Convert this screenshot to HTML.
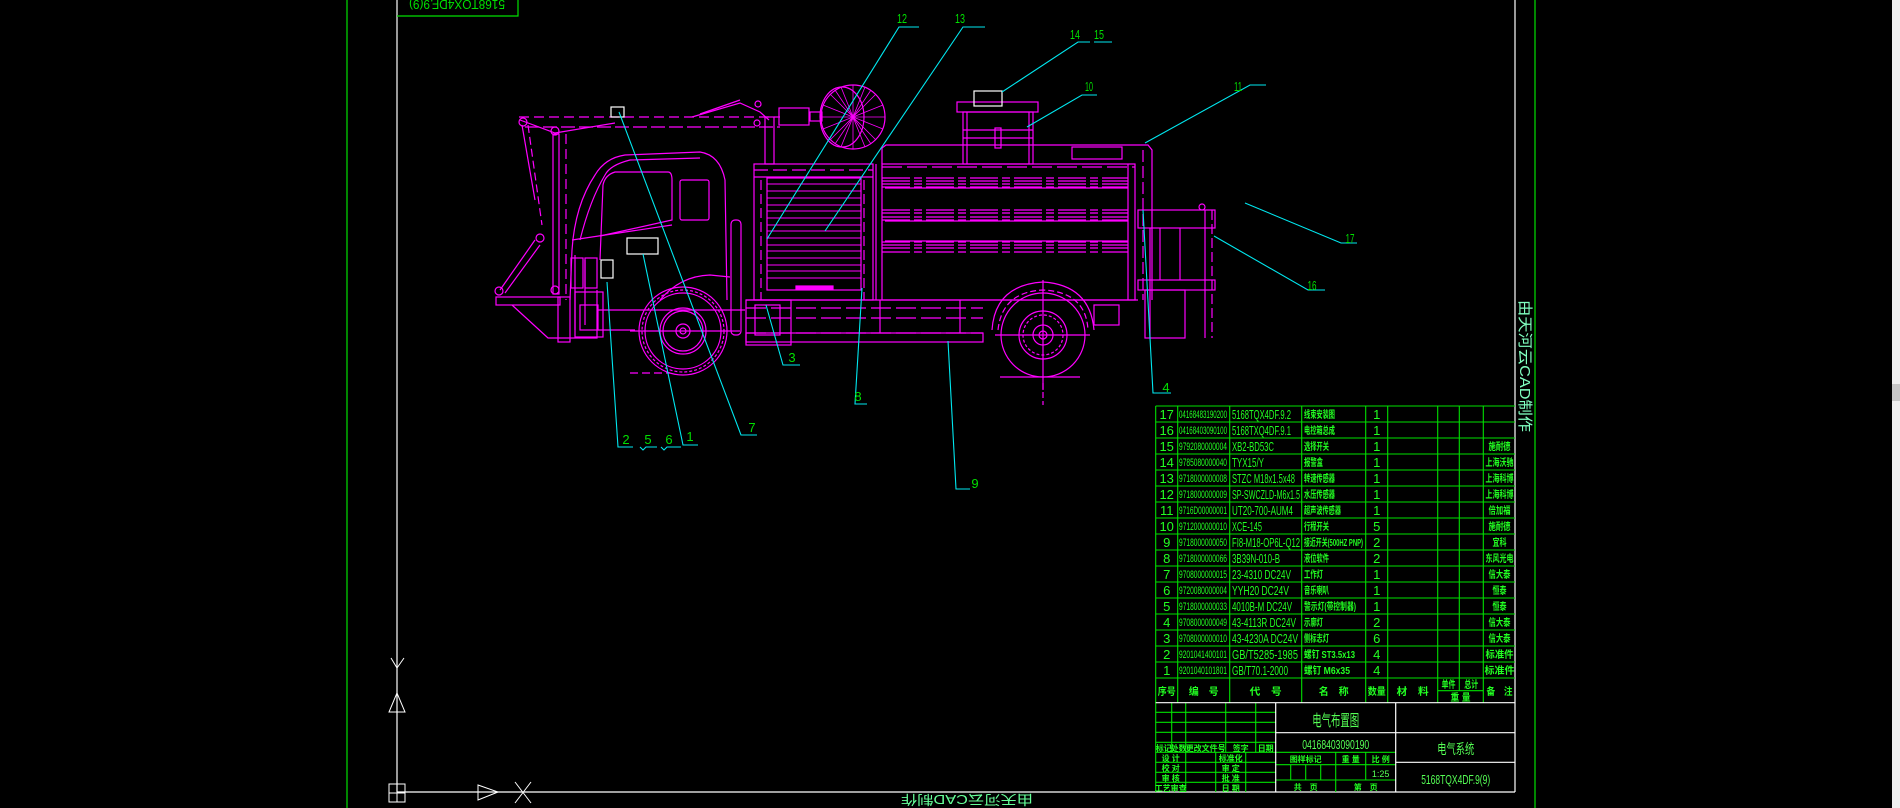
<!DOCTYPE html>
<html><head><meta charset="utf-8"><style>
html,body{margin:0;padding:0;background:#000;overflow:hidden}
svg{display:block}
text{font-family:"Liberation Sans","Noto Sans CJK SC",sans-serif}
</style></head><body>
<svg width="1900" height="808" viewBox="0 0 1900 808" xmlns="http://www.w3.org/2000/svg">
<rect width="1900" height="808" fill="#000"/>
<rect x="1892" y="0" width="8" height="808" fill="#f0f0f0"/>
<rect x="1892" y="384" width="8" height="17" fill="#c8c8c8"/>
<!-- frame -->
<g stroke-width="1.2" fill="none">
<line x1="347" y1="0" x2="347" y2="808" stroke="#00e000"/>
<line x1="1535" y1="0" x2="1535" y2="808" stroke="#00e000"/>
<line x1="397" y1="0" x2="397" y2="792" stroke="#fff"/>
<line x1="1515" y1="0" x2="1515" y2="792" stroke="#fff"/>
<line x1="397" y1="792" x2="1515" y2="792" stroke="#fff"/>
<polyline points="397,16 518,16 518,0" stroke="#00e000"/>
</g>
<text transform="rotate(180 457 5)" x="457" y="10" font-size="13" fill="#00e000" text-anchor="middle" textLength="96" lengthAdjust="spacingAndGlyphs">5168TQX4DF.9(9)</text>
<text transform="rotate(180 967 800)" x="967" y="805" font-size="13" fill="#66ff99" text-anchor="middle" textLength="132" lengthAdjust="spacingAndGlyphs">由天河云CAD制作</text>
<text transform="rotate(90 1525 366)" x="1525" y="371" font-size="15" fill="#80ffc0" text-anchor="middle" textLength="132" lengthAdjust="spacingAndGlyphs">由天河云CAD制作</text>
<!-- UCS -->
<g stroke="#fff" stroke-width="1" fill="none">
<rect x="389" y="784" width="16" height="18"/><line x1="397" y1="784" x2="397" y2="802"/><line x1="389" y1="793" x2="405" y2="793"/>
<polygon points="397,693 389,712 405,712"/><line x1="397" y1="700" x2="397" y2="712"/>
<polyline points="391,658 397,668 404,658"/><line x1="397" y1="668" x2="397" y2="678"/>
<polygon points="478,785 498,792 478,800"/><line x1="484" y1="792" x2="498" y2="792"/>
<line x1="515" y1="782" x2="531" y2="803"/><line x1="531" y1="782" x2="515" y2="803"/>
</g>

<!-- TRUCK -->
<g stroke="#ff00ff" stroke-width="1.2" fill="none">
<!-- boom -->
<line x1="519" y1="117" x2="780" y2="117" stroke-dasharray="10,5"/>
<line x1="525" y1="127" x2="780" y2="127" stroke-dasharray="14,4"/>
<polyline points="520,120 555,133 615,123"/>
<circle cx="523" cy="122" r="4"/><circle cx="555" cy="131" r="4"/>
<polyline points="692,117 740,103 760,112 769,120"/>
<line x1="700" y1="114" x2="740" y2="100"/>
<circle cx="758" cy="104" r="3"/><circle cx="757" cy="123" r="3"/>
<rect x="765" y="117" width="9" height="47"/>
<rect x="779" y="108" width="30" height="17"/>
<rect x="810" y="112" width="12" height="9"/>
<!-- brush disc -->
<ellipse cx="853" cy="117" rx="32" ry="32"/>
<ellipse cx="842" cy="117" rx="22" ry="30"/>
<g stroke-width="0.8">
<line x1="853" y1="85" x2="853" y2="149"/><line x1="821" y1="117" x2="885" y2="117"/>
<line x1="830" y1="94" x2="876" y2="140"/><line x1="876" y1="94" x2="830" y2="140"/>
<line x1="841" y1="87" x2="865" y2="147"/><line x1="865" y1="87" x2="841" y2="147"/>
<line x1="823" y1="105" x2="883" y2="129"/><line x1="823" y1="129" x2="883" y2="105"/>
<line x1="835" y1="90" x2="871" y2="144"/><line x1="871" y1="90" x2="835" y2="144"/>
</g>
<!-- hook arm -->
<line x1="522" y1="125" x2="535" y2="200"/><line x1="528" y1="125" x2="542" y2="225" stroke-dasharray="8,4"/>
<rect x="553" y="134" width="6" height="160"/>
<line x1="566" y1="134" x2="566" y2="300" stroke-dasharray="10,5"/>
<line x1="535" y1="240" x2="500" y2="290"/><line x1="540" y1="245" x2="505" y2="293"/>
<circle cx="540" cy="238" r="4"/><circle cx="555" cy="290" r="4"/><circle cx="499" cy="291" r="4"/>
<rect x="496" y="297" width="64" height="8"/>
<polyline points="512,305 548,338 597,338 597,290"/>
<rect x="558" y="297" width="12" height="45"/>
<!-- cab -->
<path d="M570,300 L572,250 Q575,205 595,175 Q605,158 625,155 L700,152 Q720,155 725,180 L727,300"/>
<path d="M580,240 Q590,200 605,175 Q610,165 630,160 L700,158"/>
<path d="M600,260 L603,185 Q605,175 615,172 L668,172 Q672,172 672,180 L672,220 L600,236"/>
<rect x="680" y="180" width="29" height="40" rx="2"/>
<line x1="572" y1="240" x2="672" y2="225"/>
<path d="M575,255 L575,330"/><path d="M585,260 L585,325"/>
<rect x="571" y="258" width="12" height="30"/><rect x="585" y="258" width="12" height="30"/>
<path d="M660,300 Q680,276 710,275 L730,277"/>
<rect x="575" y="292" width="28" height="45"/>
<rect x="580" y="305" width="18" height="25"/>
<line x1="597" y1="310" x2="745" y2="310"/>
<line x1="597" y1="330" x2="635" y2="330"/>
<rect x="731" y="220" width="10" height="115" rx="4"/>
<!-- front wheel -->
<circle cx="683" cy="331" r="44"/>
<circle cx="683" cy="331" r="41" stroke-dasharray="3,2"/>
<circle cx="683" cy="331" r="38"/>
<circle cx="683" cy="331" r="23"/><circle cx="683" cy="331" r="20"/>
<circle cx="683" cy="331" r="7"/><circle cx="683" cy="331" r="3"/>
<line x1="630" y1="331" x2="740" y2="331"/>
<line x1="630" y1="373" x2="670" y2="373" stroke-dasharray="8,4"/>
<!-- compartment -->
<rect x="754" y="164" width="119" height="136"/>
<line x1="754" y1="170" x2="873" y2="170" stroke-dasharray="14,5"/>
<line x1="754" y1="177" x2="873" y2="177"/>
<rect x="767" y="178" width="94" height="112"/>
<line x1="761" y1="180" x2="761" y2="300" stroke-dasharray="10,4"/>
<line x1="864" y1="180" x2="864" y2="300" stroke-dasharray="10,4"/>
<g stroke-width="0.9">
<line x1="767" y1="184" x2="861" y2="184"/><line x1="767" y1="191" x2="861" y2="191"/>
<line x1="767" y1="198" x2="861" y2="198"/><line x1="767" y1="205" x2="861" y2="205"/>
<line x1="767" y1="211" x2="861" y2="211"/><line x1="767" y1="218" x2="861" y2="218"/>
<line x1="767" y1="225" x2="861" y2="225"/><line x1="767" y1="231" x2="861" y2="231"/>
<line x1="767" y1="238" x2="861" y2="238"/><line x1="767" y1="245" x2="861" y2="245"/>
<line x1="767" y1="251" x2="861" y2="251"/><line x1="767" y1="258" x2="861" y2="258"/>
<line x1="767" y1="265" x2="861" y2="265"/><line x1="767" y1="271" x2="861" y2="271"/>
<line x1="767" y1="278" x2="861" y2="278"/>
</g>
<rect x="796" y="286" width="37" height="3" fill="#ff00ff"/>
<line x1="876" y1="164" x2="876" y2="300"/>
<!-- tank -->
<rect x="882" y="164" width="253" height="136"/>
<line x1="882" y1="167" x2="1135" y2="167" stroke-dasharray="20,5"/>
<polyline points="882,164 882,148 886,145 1148,145 1152,150 1152,300" />
<line x1="1143" y1="150" x2="1143" y2="300" stroke-dasharray="12,4"/>
<g stroke-width="1.3" stroke-dasharray="28,4,8,4">
<line x1="882" y1="178" x2="1128" y2="178"/><line x1="882" y1="181" x2="1128" y2="181"/>
<line x1="882" y1="184" x2="1128" y2="184"/><line x1="882" y1="187" x2="1128" y2="187"/>
<line x1="882" y1="210" x2="1128" y2="210"/><line x1="882" y1="213" x2="1128" y2="213"/>
<line x1="882" y1="217" x2="1128" y2="217"/><line x1="882" y1="220" x2="1128" y2="220"/>
<line x1="882" y1="242" x2="1128" y2="242"/><line x1="882" y1="245" x2="1128" y2="245"/>
<line x1="882" y1="248" x2="1128" y2="248"/><line x1="882" y1="252" x2="1128" y2="252"/>
</g>
<line x1="885" y1="188" x2="1128" y2="188"/><line x1="885" y1="221" x2="1128" y2="221"/>
<line x1="885" y1="241" x2="1128" y2="241"/>
<line x1="1128" y1="164" x2="1128" y2="300"/>
<rect x="1072" y="147" width="50" height="12"/>
<!-- roof rack -->
<rect x="957" y="102" width="81" height="10"/>
<rect x="963" y="112" width="70" height="52"/>
<line x1="967" y1="112" x2="967" y2="164"/><line x1="1029" y1="112" x2="1029" y2="164"/>
<line x1="963" y1="130" x2="1033" y2="130"/><line x1="963" y1="138" x2="1033" y2="138"/>
<rect x="995" y="128" width="6" height="20"/>
<!-- rear platform -->
<rect x="1138" y="210" width="77" height="18"/>
<line x1="1150" y1="228" x2="1150" y2="338"/><line x1="1160" y1="228" x2="1160" y2="280"/>
<line x1="1180" y1="228" x2="1180" y2="280"/>
<rect x="1138" y="280" width="77" height="10"/>
<rect x="1145" y="290" width="40" height="48"/>
<line x1="1205" y1="210" x2="1205" y2="338"/><line x1="1212" y1="210" x2="1212" y2="338" stroke-dasharray="10,4"/>
<circle cx="1202" cy="207" r="3"/>
<!-- chassis -->
<line x1="746" y1="300" x2="1138" y2="300"/>
<line x1="746" y1="308" x2="983" y2="308" stroke-dasharray="20,5"/>
<line x1="746" y1="318" x2="983" y2="318" stroke-dasharray="20,5"/>
<line x1="746" y1="333" x2="983" y2="333" stroke-dasharray="20,5"/>
<rect x="746" y="333" width="237" height="9"/>
<rect x="746" y="300" width="45" height="45"/>
<rect x="755" y="305" width="25" height="30"/>
<line x1="880" y1="300" x2="880" y2="333"/><line x1="960" y1="300" x2="960" y2="333"/>
<!-- rear wheel -->
<path d="M992,330 Q995,285 1043,282 Q1090,285 1094,330"/>
<path d="M998,330 Q1002,292 1043,290 Q1086,292 1088,330" stroke-dasharray="6,3"/>
<circle cx="1043" cy="335" r="42"/>
<circle cx="1043" cy="335" r="24"/><circle cx="1043" cy="335" r="20" stroke-dasharray="3,2"/>
<circle cx="1043" cy="335" r="10"/><circle cx="1043" cy="335" r="4"/>
<line x1="1043" y1="280" x2="1043" y2="390"/><line x1="995" y1="335" x2="1090" y2="335"/>
<line x1="1000" y1="377" x2="1080" y2="377"/>
<line x1="1043" y1="383" x2="1043" y2="405" stroke-dasharray="6,3"/>
<rect x="1094" y="305" width="25" height="20"/>
</g>
<!-- white boxes -->
<g stroke="#fff" stroke-width="1.2" fill="none">
<rect x="611" y="107" width="13" height="10"/>
<rect x="627" y="238" width="31" height="16"/>
<rect x="601" y="260" width="12" height="18"/>
<rect x="974" y="91" width="28" height="15"/>
</g>
<!-- leaders -->
<g stroke="#00e8f0" stroke-width="1.1" fill="none">
<polyline points="767,239 899,27 919,27"/>
<polyline points="825,231 963,27 985,27"/>
<polyline points="1002,92 1078,42 1090,42"/>
<line x1="1094" y1="42" x2="1112" y2="42"/>
<polyline points="1027,127 1082,95 1097,95"/>
<polyline points="1145,143 1250,85 1266,85"/>
<polyline points="1245,203 1341,243 1357,243"/>
<polyline points="1214,236 1308,290 1325,290"/>
<polyline points="1143,210 1153,393 1171,393"/>
<polyline points="948,341 956,489 970,489"/>
<polyline points="862,288 855,404 867,404"/>
<polyline points="766,305 783,365 800,365"/>
<polyline points="619,112 741,435 757,435"/>
<polyline points="607,282 618,447 633,447"/>
<polyline points="640,447 643,450 646,447 657,447"/>
<polyline points="661,447 664,450 667,447 681,447"/>
<polyline points="643,254 683,445 698,445"/>
</g>
<g fill="#00e000" font-size="13" text-anchor="middle">
<text x="902" y="23" textLength="10" lengthAdjust="spacingAndGlyphs">12</text>
<text x="960" y="23" textLength="10" lengthAdjust="spacingAndGlyphs">13</text>
<text x="1075" y="39" textLength="10" lengthAdjust="spacingAndGlyphs">14</text>
<text x="1099" y="39" textLength="10" lengthAdjust="spacingAndGlyphs">15</text>
<text x="1089" y="91" textLength="8" lengthAdjust="spacingAndGlyphs">10</text>
<text x="1238" y="91" textLength="8" lengthAdjust="spacingAndGlyphs">11</text>
<text x="1350" y="243" textLength="9" lengthAdjust="spacingAndGlyphs">17</text>
<text x="1312" y="290" textLength="9" lengthAdjust="spacingAndGlyphs">16</text>
<text x="1166" y="392">4</text>
<text x="975" y="488">9</text>
<text x="858" y="401">8</text>
<text x="792" y="362">3</text>
<text x="752" y="432">7</text>
<text x="626" y="444">2</text>
<text x="648" y="444">5</text>
<text x="669" y="444">6</text>
<text x="690" y="441">1</text>
</g>

<!-- TABLE -->
<g stroke="#00e000" stroke-width="1.1" fill="none">
<line x1="1155.7" y1="406" x2="1515" y2="406"/>
<line x1="1155.7" y1="422" x2="1515" y2="422"/><line x1="1155.7" y1="438" x2="1515" y2="438"/>
<line x1="1155.7" y1="454" x2="1515" y2="454"/><line x1="1155.7" y1="470" x2="1515" y2="470"/>
<line x1="1155.7" y1="486" x2="1515" y2="486"/><line x1="1155.7" y1="502" x2="1515" y2="502"/>
<line x1="1155.7" y1="518" x2="1515" y2="518"/><line x1="1155.7" y1="534" x2="1515" y2="534"/>
<line x1="1155.7" y1="550" x2="1515" y2="550"/><line x1="1155.7" y1="566" x2="1515" y2="566"/>
<line x1="1155.7" y1="582" x2="1515" y2="582"/><line x1="1155.7" y1="598" x2="1515" y2="598"/>
<line x1="1155.7" y1="614" x2="1515" y2="614"/><line x1="1155.7" y1="630" x2="1515" y2="630"/>
<line x1="1155.7" y1="646" x2="1515" y2="646"/><line x1="1155.7" y1="662" x2="1515" y2="662"/>
<line x1="1155.7" y1="678" x2="1515" y2="678"/>
<line x1="1437.7" y1="690.7" x2="1483.3" y2="690.7"/>
<line x1="1155.7" y1="406" x2="1155.7" y2="792"/>
<line x1="1177.7" y1="406" x2="1177.7" y2="702.7"/><line x1="1229.7" y1="406" x2="1229.7" y2="702.7"/>
<line x1="1301.7" y1="406" x2="1301.7" y2="702.7"/><line x1="1365.7" y1="406" x2="1365.7" y2="702.7"/>
<line x1="1387.7" y1="406" x2="1387.7" y2="702.7"/><line x1="1437.7" y1="406" x2="1437.7" y2="702.7"/>
<line x1="1459.3" y1="406" x2="1459.3" y2="690.7"/><line x1="1483.3" y1="406" x2="1483.3" y2="702.7"/>
<!-- left title block -->
<line x1="1155.7" y1="712.3" x2="1275.7" y2="712.3"/><line x1="1155.7" y1="722.3" x2="1275.7" y2="722.3"/>
<line x1="1155.7" y1="732.3" x2="1275.7" y2="732.3"/><line x1="1155.7" y1="742.3" x2="1275.7" y2="742.3"/>
<line x1="1155.7" y1="752.3" x2="1275.7" y2="752.3"/><line x1="1155.7" y1="762.3" x2="1275.7" y2="762.3"/>
<line x1="1155.7" y1="772.3" x2="1275.7" y2="772.3"/><line x1="1155.7" y1="782.3" x2="1275.7" y2="782.3"/>
<line x1="1171.7" y1="702.7" x2="1171.7" y2="752.3"/><line x1="1185.7" y1="702.7" x2="1185.7" y2="792"/>
<line x1="1225.7" y1="702.7" x2="1225.7" y2="752.3"/><line x1="1255.7" y1="702.7" x2="1255.7" y2="752.3"/>
<line x1="1215.7" y1="752.3" x2="1215.7" y2="792"/><line x1="1245.7" y1="752.3" x2="1245.7" y2="792"/>
<!-- middle -->
<line x1="1275.7" y1="752.3" x2="1395.7" y2="752.3"/><line x1="1275.7" y1="764.7" x2="1395.7" y2="764.7"/>
<line x1="1275.7" y1="780" x2="1395.7" y2="780"/>
<line x1="1290.7" y1="764.7" x2="1290.7" y2="780"/><line x1="1305.7" y1="764.7" x2="1305.7" y2="780"/>
<line x1="1320.7" y1="764.7" x2="1320.7" y2="780"/><line x1="1335.7" y1="752.3" x2="1335.7" y2="792"/>
<line x1="1365.7" y1="752.3" x2="1365.7" y2="780"/>
</g>
<g stroke="#fff" stroke-width="1.2" fill="none">
<line x1="1155.7" y1="702.7" x2="1515" y2="702.7"/>
<line x1="1275.7" y1="702.7" x2="1275.7" y2="792"/>
<line x1="1395.7" y1="702.7" x2="1395.7" y2="792"/>
<line x1="1275.7" y1="732.7" x2="1515" y2="732.7"/>
<line x1="1395.7" y1="762.3" x2="1515" y2="762.3"/>
</g>
<g fill="#22ff22" font-size="13" lengthAdjust="spacingAndGlyphs">
<g text-anchor="middle">
<text x="1166.7" y="419">17</text><text x="1166.7" y="435">16</text><text x="1166.7" y="451">15</text>
<text x="1166.7" y="467">14</text><text x="1166.7" y="483">13</text><text x="1166.7" y="499">12</text>
<text x="1166.7" y="515">11</text><text x="1166.7" y="531">10</text><text x="1166.7" y="547">9</text>
<text x="1166.7" y="563">8</text><text x="1166.7" y="579">7</text><text x="1166.7" y="595">6</text>
<text x="1166.7" y="611">5</text><text x="1166.7" y="627">4</text><text x="1166.7" y="643">3</text>
<text x="1166.7" y="659">2</text><text x="1166.7" y="675">1</text>
<text x="1376.7" y="419">1</text><text x="1376.7" y="435">1</text><text x="1376.7" y="451">1</text>
<text x="1376.7" y="467">1</text><text x="1376.7" y="483">1</text><text x="1376.7" y="499">1</text>
<text x="1376.7" y="515">1</text><text x="1376.7" y="531">5</text><text x="1376.7" y="547">2</text>
<text x="1376.7" y="563">2</text><text x="1376.7" y="579">1</text><text x="1376.7" y="595">1</text>
<text x="1376.7" y="611">1</text><text x="1376.7" y="627">2</text><text x="1376.7" y="643">6</text>
<text x="1376.7" y="659">4</text><text x="1376.7" y="675">4</text>
</g>
<g font-size="11">
<text x="1179" y="418" textLength="48" lengthAdjust="spacingAndGlyphs">04168483190200</text>
<text x="1179" y="434" textLength="48" lengthAdjust="spacingAndGlyphs">04168403090100</text>
<text x="1179" y="450" textLength="48" lengthAdjust="spacingAndGlyphs">9792080000004</text>
<text x="1179" y="466" textLength="48" lengthAdjust="spacingAndGlyphs">9785080000040</text>
<text x="1179" y="482" textLength="48" lengthAdjust="spacingAndGlyphs">9718000000008</text>
<text x="1179" y="498" textLength="48" lengthAdjust="spacingAndGlyphs">9718000000009</text>
<text x="1179" y="514" textLength="48" lengthAdjust="spacingAndGlyphs">9716D00000001</text>
<text x="1179" y="530" textLength="48" lengthAdjust="spacingAndGlyphs">9712000000010</text>
<text x="1179" y="546" textLength="48" lengthAdjust="spacingAndGlyphs">9718000000050</text>
<text x="1179" y="562" textLength="48" lengthAdjust="spacingAndGlyphs">9718000000066</text>
<text x="1179" y="578" textLength="48" lengthAdjust="spacingAndGlyphs">9708000000015</text>
<text x="1179" y="594" textLength="48" lengthAdjust="spacingAndGlyphs">9720080000004</text>
<text x="1179" y="610" textLength="48" lengthAdjust="spacingAndGlyphs">9718000000033</text>
<text x="1179" y="626" textLength="48" lengthAdjust="spacingAndGlyphs">9708000000049</text>
<text x="1179" y="642" textLength="48" lengthAdjust="spacingAndGlyphs">9708000000010</text>
<text x="1179" y="658" textLength="48" lengthAdjust="spacingAndGlyphs">9201041400101</text>
<text x="1179" y="674" textLength="48" lengthAdjust="spacingAndGlyphs">9201040101801</text>
</g>
<text x="1232" y="419" textLength="59" lengthAdjust="spacingAndGlyphs">5168TQX4DF.9.2</text>
<text x="1232" y="435" textLength="59" lengthAdjust="spacingAndGlyphs">5168TXQ4DF.9.1</text>
<text x="1232" y="451" textLength="42" lengthAdjust="spacingAndGlyphs">XB2-BD53C</text>
<text x="1232" y="467" textLength="32" lengthAdjust="spacingAndGlyphs">TYX15/Y</text>
<text x="1232" y="483" textLength="63" lengthAdjust="spacingAndGlyphs">STZC M18x1.5x48</text>
<text x="1232" y="499" textLength="68" lengthAdjust="spacingAndGlyphs">SP-SWCZLD-M6x1.5</text>
<text x="1232" y="515" textLength="61" lengthAdjust="spacingAndGlyphs">UT20-700-AUM4</text>
<text x="1232" y="531" textLength="30" lengthAdjust="spacingAndGlyphs">XCE-145</text>
<text x="1232" y="547" textLength="68" lengthAdjust="spacingAndGlyphs">FI8-M18-OP6L-Q12</text>
<text x="1232" y="563" textLength="48" lengthAdjust="spacingAndGlyphs">3B39N-010-B</text>
<text x="1232" y="579" textLength="59" lengthAdjust="spacingAndGlyphs">23-4310 DC24V</text>
<text x="1232" y="595" textLength="57" lengthAdjust="spacingAndGlyphs">YYH20 DC24V</text>
<text x="1232" y="611" textLength="60" lengthAdjust="spacingAndGlyphs">4010B-M DC24V</text>
<text x="1232" y="627" textLength="64" lengthAdjust="spacingAndGlyphs">43-4113R DC24V</text>
<text x="1232" y="643" textLength="66" lengthAdjust="spacingAndGlyphs">43-4230A DC24V</text>
<text x="1232" y="659" textLength="66" lengthAdjust="spacingAndGlyphs">GB/T5285-1985</text>
<text x="1232" y="675" textLength="56" lengthAdjust="spacingAndGlyphs">GB/T70.1-2000</text>
<g font-size="10" font-weight="bold">
<text x="1304" y="418" textLength="31" lengthAdjust="spacingAndGlyphs">线束安装图</text>
<text x="1304" y="434" textLength="31" lengthAdjust="spacingAndGlyphs">电控箱总成</text>
<text x="1304" y="450" textLength="25" lengthAdjust="spacingAndGlyphs">选择开关</text>
<text x="1304" y="466" textLength="19" lengthAdjust="spacingAndGlyphs">报警盒</text>
<text x="1304" y="482" textLength="31" lengthAdjust="spacingAndGlyphs">转速传感器</text>
<text x="1304" y="498" textLength="31" lengthAdjust="spacingAndGlyphs">水压传感器</text>
<text x="1304" y="514" textLength="37" lengthAdjust="spacingAndGlyphs">超声波传感器</text>
<text x="1304" y="530" textLength="25" lengthAdjust="spacingAndGlyphs">行程开关</text>
<text x="1304" y="546" textLength="59" lengthAdjust="spacingAndGlyphs">接近开关(500HZ PNP)</text>
<text x="1304" y="562" textLength="25" lengthAdjust="spacingAndGlyphs">液位软件</text>
<text x="1304" y="578" textLength="19" lengthAdjust="spacingAndGlyphs">工作灯</text>
<text x="1304" y="594" textLength="25" lengthAdjust="spacingAndGlyphs">音乐喇叭</text>
<text x="1304" y="610" textLength="52" lengthAdjust="spacingAndGlyphs">警示灯(带控制器)</text>
<text x="1304" y="626" textLength="19" lengthAdjust="spacingAndGlyphs">示廓灯</text>
<text x="1304" y="642" textLength="25" lengthAdjust="spacingAndGlyphs">侧标志灯</text>
<text x="1304" y="658" textLength="51" lengthAdjust="spacingAndGlyphs">螺钉 ST3.5x13</text>
<text x="1304" y="674" textLength="46" lengthAdjust="spacingAndGlyphs">螺钉 M6x35</text>
<g text-anchor="middle">
<text x="1499.5" y="450" textLength="22" lengthAdjust="spacingAndGlyphs">施耐德</text>
<text x="1499.5" y="466" textLength="28" lengthAdjust="spacingAndGlyphs">上海沃驰</text>
<text x="1499.5" y="482" textLength="28" lengthAdjust="spacingAndGlyphs">上海科博</text>
<text x="1499.5" y="498" textLength="28" lengthAdjust="spacingAndGlyphs">上海科博</text>
<text x="1499.5" y="514" textLength="22" lengthAdjust="spacingAndGlyphs">倍加福</text>
<text x="1499.5" y="530" textLength="22" lengthAdjust="spacingAndGlyphs">施耐德</text>
<text x="1499.5" y="546" textLength="14" lengthAdjust="spacingAndGlyphs">宜科</text>
<text x="1499.5" y="562" textLength="28" lengthAdjust="spacingAndGlyphs">东风光电</text>
<text x="1499.5" y="578" textLength="22" lengthAdjust="spacingAndGlyphs">信大泰</text>
<text x="1499.5" y="594" textLength="14" lengthAdjust="spacingAndGlyphs">恒泰</text>
<text x="1499.5" y="610" textLength="14" lengthAdjust="spacingAndGlyphs">恒泰</text>
<text x="1499.5" y="626" textLength="22" lengthAdjust="spacingAndGlyphs">信大泰</text>
<text x="1499.5" y="642" textLength="22" lengthAdjust="spacingAndGlyphs">信大泰</text>
<text x="1499.5" y="658" textLength="28" lengthAdjust="spacingAndGlyphs">标准件</text>
<text x="1499.5" y="674" textLength="30" lengthAdjust="spacingAndGlyphs">标准件</text>
<!-- header -->
<text x="1166.7" y="695" textLength="18" lengthAdjust="spacingAndGlyphs">序号</text>
<text x="1203.7" y="695" textLength="30" lengthAdjust="spacingAndGlyphs">编　号</text>
<text x="1265.7" y="695" textLength="32" lengthAdjust="spacingAndGlyphs">代　号</text>
<text x="1333.7" y="695" textLength="30" lengthAdjust="spacingAndGlyphs">名　称</text>
<text x="1376.7" y="695" textLength="18" lengthAdjust="spacingAndGlyphs">数量</text>
<text x="1412.7" y="695" textLength="32" lengthAdjust="spacingAndGlyphs">材　料</text>
<text x="1448.5" y="688" textLength="14" lengthAdjust="spacingAndGlyphs">单件</text>
<text x="1471.3" y="688" textLength="14" lengthAdjust="spacingAndGlyphs">总计</text>
<text x="1460.5" y="701" textLength="20" lengthAdjust="spacingAndGlyphs">重 量</text>
<text x="1499.5" y="695" textLength="26" lengthAdjust="spacingAndGlyphs">备　注</text>
</g>
</g>
<!-- title block texts -->
<g text-anchor="middle" font-size="8" font-weight="bold">
<text x="1163.7" y="751">标记</text><text x="1178.7" y="751">处数</text>
<text x="1205.7" y="751">更改文件号</text><text x="1240.7" y="751">签字</text><text x="1265.7" y="751">日期</text>
<text x="1170.7" y="761">设 计</text><text x="1230.7" y="761">标准化</text>
<text x="1170.7" y="771">校 对</text><text x="1230.7" y="771">审 定</text>
<text x="1170.7" y="781">审 核</text><text x="1230.7" y="781">批 准</text>
<text x="1170.7" y="791">工艺审查</text><text x="1230.7" y="791">日 期</text>
<text x="1305.7" y="762">图样标记</text><text x="1350.7" y="762">重 量</text><text x="1380.7" y="762">比 例</text>
<text x="1305.7" y="790">共　页</text><text x="1365.7" y="790">第　页</text>
</g>
<g fill="#55ff55" text-anchor="middle">
<text x="1380.7" y="777" font-size="9">1:25</text>
<text x="1335.7" y="726" font-size="16" textLength="47" lengthAdjust="spacingAndGlyphs">电气布置图</text>
<text x="1335.7" y="749" font-size="13" textLength="67" lengthAdjust="spacingAndGlyphs">04168403090190</text>
<text x="1455.7" y="754" font-size="14" textLength="37" lengthAdjust="spacingAndGlyphs">电气系统</text>
<text x="1455.7" y="784" font-size="13" textLength="69" lengthAdjust="spacingAndGlyphs">5168TQX4DF.9(9)</text>
</g>
</g>
</svg>
</body></html>
